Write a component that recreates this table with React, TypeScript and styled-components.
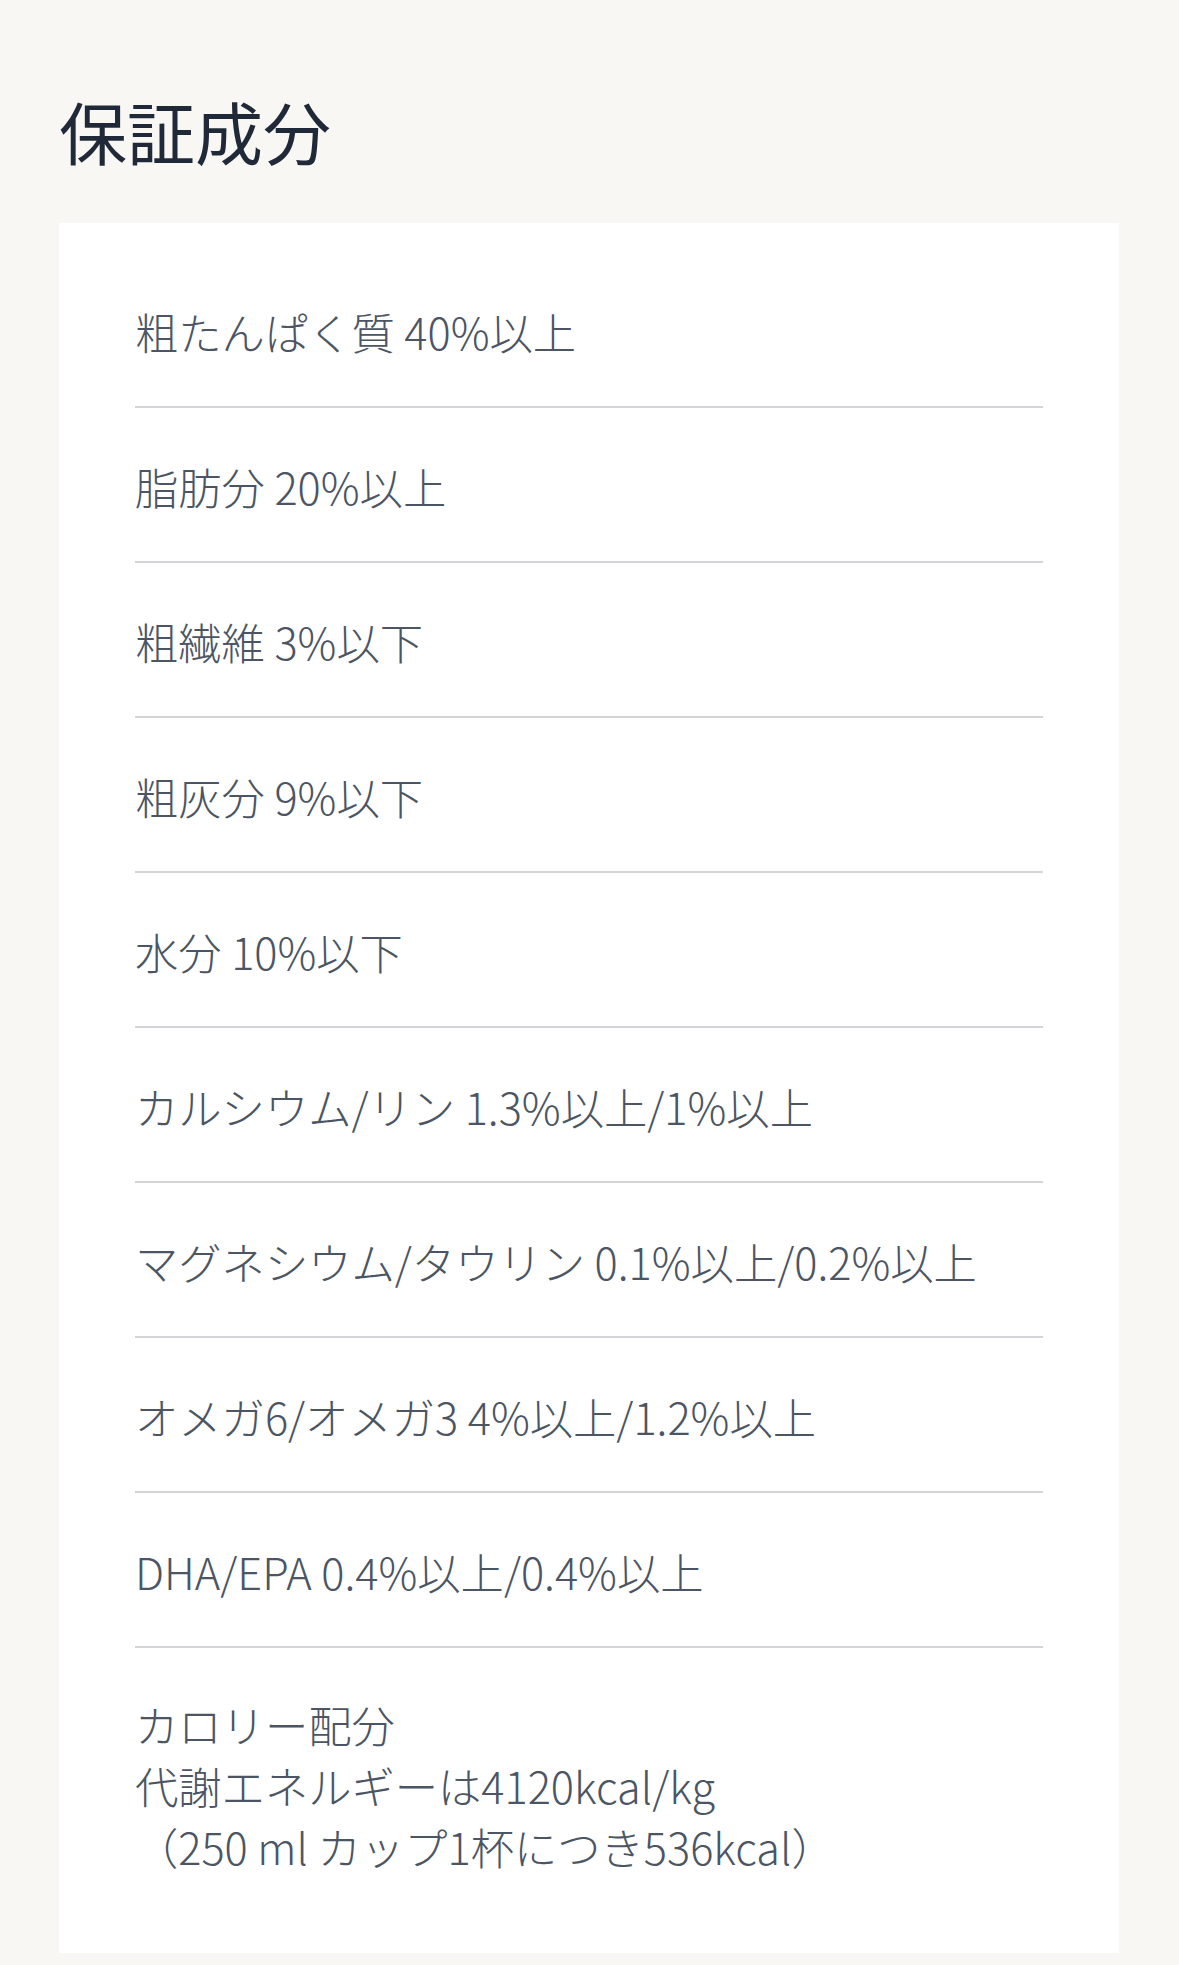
import styled, { createGlobalStyle } from "styled-components";

const GlobalStyle = createGlobalStyle`
  html, body {
    margin: 0;
    padding: 0;
    background-color: #f8f7f4;
  }

  body {
    font-family: "Noto Sans CJK JP", "Noto Sans", sans-serif;
  }
`;

const ITEMS: string[][] = [
  ["粗たんぱく質 40%以上"],
  ["脂肪分 20%以上"],
  ["粗繊維 3%以下"],
  ["粗灰分 9%以下"],
  ["水分 10%以下"],
  ["カルシウム/リン 1.3%以上/1%以上"],
  ["マグネシウム/タウリン 0.1%以上/0.2%以上"],
  ["オメガ6/オメガ3 4%以上/1.2%以上"],
  ["DHA/EPA 0.4%以上/0.4%以上"],
  ["カロリー配分", "代謝エネルギーは4120kcal/kg", "（250 ml カップ1杯につき536kcal）"],
];

function App() {
  return (
    <>
      <GlobalStyle />
      <Page>
        <Title>保証成分</Title>
        <Card>
          <List>
            {ITEMS.map((lines, i) => (
              <Row key={i} last={i === ITEMS.length - 1}>
                {lines.map((line) => (
                  <Line key={line}>{line}</Line>
                ))}
              </Row>
            ))}
          </List>
        </Card>
      </Page>
    </>
  );
}

const Page = styled.main`
  min-height: 100vh;
  box-sizing: border-box;
  padding: 0 60px 13px 59px;
  background-color: #f8f7f4;
`;

const Title = styled.h2`
  margin: 0;
  padding: 91px 0 52px;
  font-size: 68px;
  line-height: 80px;
  font-weight: 400;
  color: #1f2937;
`;

const Card = styled.section`
  background-color: #ffffff;
  padding: 30px 76px 26px;
`;

const List = styled.ul`
  list-style: none;
  margin: 0;
  padding: 0;
`;

const Row = styled.li<{ last?: boolean }>`
  padding: ${({ last }) => (last ? "46px 0 50px" : "48px 0 44px")};
  border-bottom: ${({ last }) => (last ? "none" : "2px solid #d4d5d9")};
  display: flex;
  flex-direction: column;
`;

const Line = styled.span`
  font-size: 43.3px;
  line-height: 61px;
  font-weight: 300;
  color: #4b5563;
  white-space: nowrap;
`;

export default App;
